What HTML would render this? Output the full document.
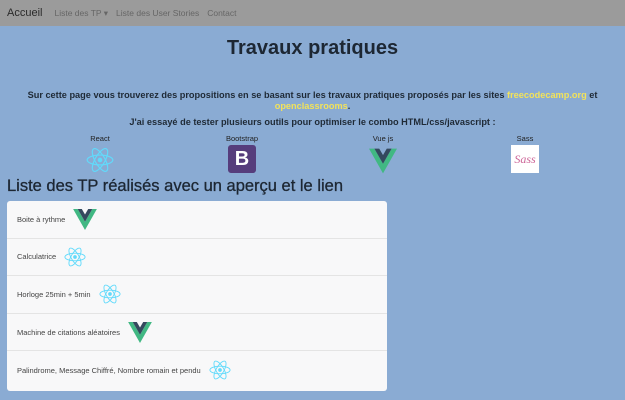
<!DOCTYPE html>
<html><head><meta charset="utf-8"><style>
body{margin:0;width:625px;height:400px;overflow:hidden;background:#8aabd3;font-family:"Liberation Sans",sans-serif;color:#1f2a36}
.nav{height:26px;background:#9b9b9b;display:flex;align-items:center;font-size:8.5px;color:#666}
.nav .b{font-size:11px;color:#2a2a2a;margin-left:7px;margin-right:12px}
.nav span{margin-right:8px}
h1{font-size:20px;font-weight:bold;text-align:center;margin:0;position:absolute;top:37px;width:625px;color:#1d2733}
.p{position:absolute;width:625px;text-align:center;font-size:9.2px;font-weight:bold}
.y{color:#f2e25a}
.lab{position:absolute;font-size:7.5px;color:#222;text-align:center;width:60px}
.ic{position:absolute;width:28px;height:28px}
h2{position:absolute;top:177px;left:7px;margin:0;font-size:16.5px;font-weight:normal;color:#1d2733;-webkit-text-stroke:0.3px #1d2733}
.card{position:absolute;left:7px;top:201px;width:380px;height:190px;background:#f8f8f9;border-radius:3px}
.row{height:37.6px;border-bottom:1px solid #e4e4e4;display:flex;align-items:center;font-size:7.5px;color:#444;padding-left:10px;box-sizing:border-box}
.row:last-child{border-bottom:none}
.row svg{margin-left:8px}
</style></head><body>
<svg width="0" height="0" style="position:absolute"><defs>
<symbol id="r" viewBox="-12 -12 24 24"><g fill="none" stroke="#61dafb" stroke-width="1"><ellipse rx="11" ry="4.2"/><ellipse rx="11" ry="4.2" transform="rotate(60)"/><ellipse rx="11" ry="4.2" transform="rotate(120)"/></g><circle r="2" fill="#61dafb"/></symbol>
<symbol id="v" viewBox="0 0 26 23"><path d="M0 0h5l8 14 8-14h5L13 23z" fill="#41b883"/><path d="M5 0h4.5l3.5 6 3.5-6H21l-8 14z" fill="#34495e"/></symbol>
</defs></svg>
<div class="nav"><span class="b">Accueil</span><span>Liste des TP ▾</span><span>Liste des User Stories</span><span>Contact</span></div>
<h1>Travaux pratiques</h1>
<div class="p" style="top:90px">Sur cette page vous trouverez des propositions en se basant sur les travaux pratiques proposés par les sites <span class="y">freecodecamp.org</span> et</div>
<div class="p" style="top:101px"><span class="y">openclassrooms</span>.</div>
<div class="p" style="top:117px">J'ai essayé de tester plusieurs outils pour optimiser le combo HTML/css/javascript :</div>
<div class="lab" style="left:70px;top:134px">React</div>
<div class="lab" style="left:212px;top:134px">Bootstrap</div>
<div class="lab" style="left:353px;top:134px">Vue js</div>
<div class="lab" style="left:495px;top:134px">Sass</div>
<svg class="ic" style="left:86px;top:146px"><use href="#r"/></svg>
<div class="ic" style="left:228px;top:145px;background:#563d7c;border-radius:3px;color:#fff;font-weight:bold;font-size:20px;text-align:center;line-height:28px">B</div>
<svg class="ic" style="left:369px;top:147px"><use href="#v"/></svg>
<div class="ic" style="left:511px;top:145px;background:#fff;color:#cd6799;font-family:'Liberation Serif',serif;font-style:italic;font-size:12px;text-align:center;line-height:28px">Sass</div>
<h2>Liste des TP réalisés avec un aperçu et le lien</h2>
<div class="card">
<div class="row">Boite à rythme<svg width="24" height="21"><use href="#v"/></svg></div>
<div class="row">Calculatrice<svg width="22" height="22"><use href="#r"/></svg></div>
<div class="row">Horloge 25min + 5min<svg width="22" height="22"><use href="#r"/></svg></div>
<div class="row">Machine de citations aléatoires<svg width="24" height="21"><use href="#v"/></svg></div>
<div class="row">Palindrome, Message Chiffré, Nombre romain et pendu<svg width="22" height="22"><use href="#r"/></svg></div>
</div>
</body></html>
